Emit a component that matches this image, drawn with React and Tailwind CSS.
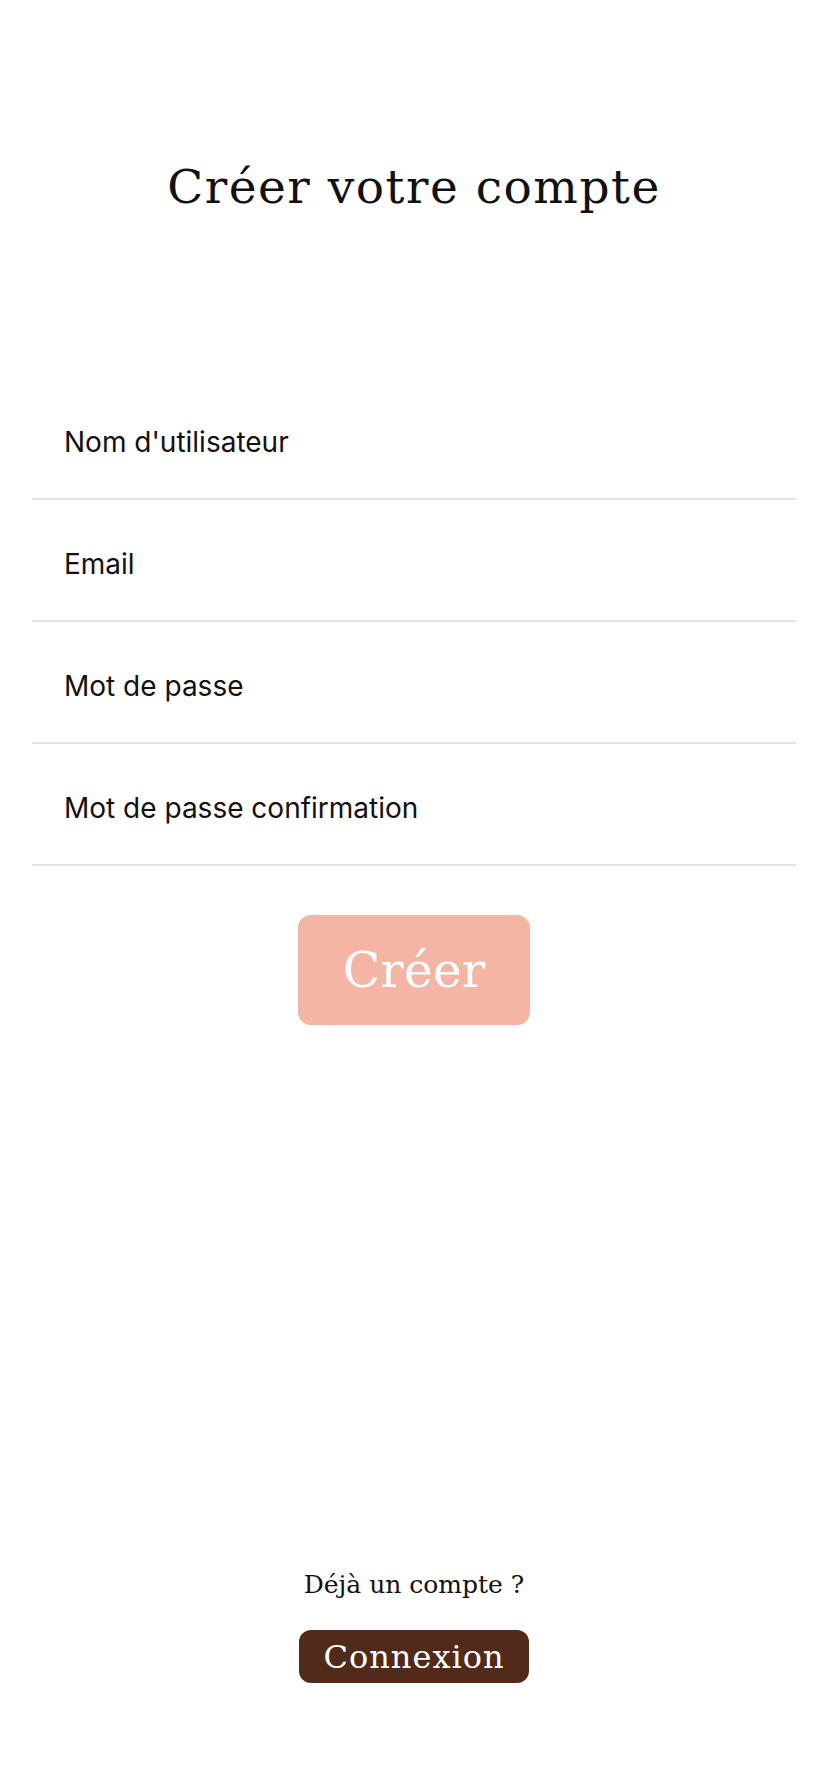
import React from 'react'

const serif = { fontFamily: '"DejaVu Serif", "Liberation Serif", serif' }

export default function App() {
    const fields = ["Nom d'utilisateur", 'Email', 'Mot de passe', 'Mot de passe confirmation']

    return (
        <div className="w-[828px] h-[1792px] bg-white flex flex-col">
            {/* Title */}
            <h1
                className="mt-[163px] text-center text-[47px] leading-none text-[#111111] tracking-[1.5px]"
                style={serif}
            >
                Créer votre compte
            </h1>

            {/* Fields */}
            <div className="mt-[168px] mx-8">
                {fields.map((label) => (
                    <div
                        key={label}
                        className="h-[122px] border-b-2 border-[#e2e2e2] flex items-center pt-2 px-8"
                    >
                        <input
                            placeholder={label}
                            className="w-full bg-transparent outline-none text-[28px] text-[#111111] placeholder:text-[#111111] font-['Inter',sans-serif]"
                        />
                    </div>
                ))}
            </div>

            {/* Submit */}
            <div className="flex justify-center mt-[49px]">
                <button
                    className="w-[232px] h-[110px] rounded-[13px] bg-[#f5b5a5] text-white text-[49px] leading-none flex items-center justify-center"
                    style={serif}
                >
                    Créer
                </button>
            </div>

            <div className="flex-1" />

            {/* Login link */}
            <div className="flex flex-col items-center pb-[109px]">
                <p className="text-[25px] leading-none text-[#111111]" style={serif}>
                    Déjà un compte ?
                </p>
                <button
                    className="mt-[33px] w-[230px] h-[53px] rounded-[12px] bg-[#512a1a] text-white text-[32px] leading-none tracking-[1px] flex items-center justify-center"
                    style={serif}
                >
                    Connexion
                </button>
            </div>
        </div>
    )
}
